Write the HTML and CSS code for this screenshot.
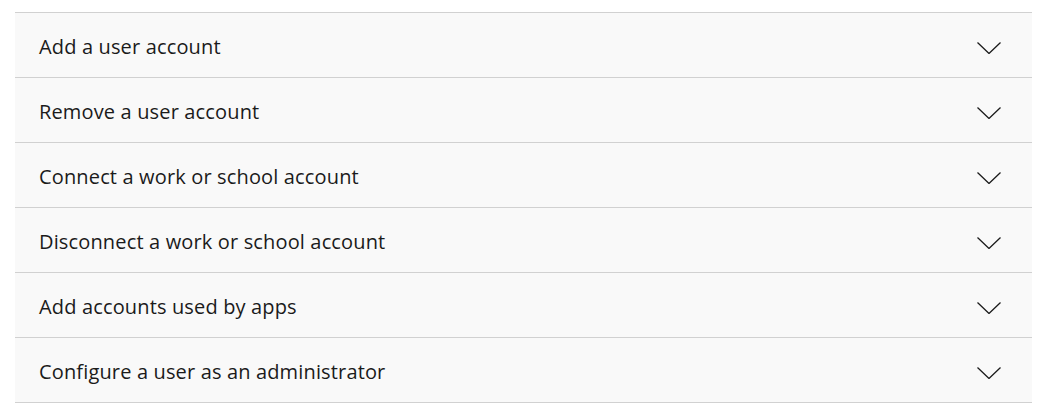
FILE: index.html
```html
<!DOCTYPE html>
<html lang="en">
<head>
<meta charset="utf-8">
<title>Accounts</title>
<link rel="stylesheet" href="styles.css">
</head>
<body>
<ul class="list">
  <li class="item"><span class="label">Add a user account</span><svg class="chev" viewBox="0 0 24 12" width="24" height="12"><path d="M0.5 0.5 L12 11.5 L23.5 0.5" /></svg></li>
  <li class="item"><span class="label">Remove a user account</span><svg class="chev" viewBox="0 0 24 12" width="24" height="12"><path d="M0.5 0.5 L12 11.5 L23.5 0.5" /></svg></li>
  <li class="item"><span class="label">Connect a work or school account</span><svg class="chev" viewBox="0 0 24 12" width="24" height="12"><path d="M0.5 0.5 L12 11.5 L23.5 0.5" /></svg></li>
  <li class="item"><span class="label">Disconnect a work or school account</span><svg class="chev" viewBox="0 0 24 12" width="24" height="12"><path d="M0.5 0.5 L12 11.5 L23.5 0.5" /></svg></li>
  <li class="item"><span class="label">Add accounts used by apps</span><svg class="chev" viewBox="0 0 24 12" width="24" height="12"><path d="M0.5 0.5 L12 11.5 L23.5 0.5" /></svg></li>
  <li class="item"><span class="label">Configure a user as an administrator</span><svg class="chev" viewBox="0 0 24 12" width="24" height="12"><path d="M0.5 0.5 L12 11.5 L23.5 0.5" /></svg></li>
</ul>
</body>
</html>
```
FILE: styles.css
```css
html, body {
  margin: 0;
  padding: 0;
  background: #ffffff;
}
body {
  padding: 12px 11px 0 15px;
  font-family: "Open Sans", "Noto Sans", sans-serif;
}
.list {
  list-style: none;
  margin: 0;
  padding: 0;
  border-bottom: 1px solid #d1d1d1;
}
.item {
  display: flex;
  align-items: center;
  justify-content: space-between;
  height: 64px;
  border-top: 1px solid #d1d1d1;
  background: #f9f9f9;
  padding: 0 31px 0 24px;
}
.label {
  margin-top: 2px;
  font-size: 20px;
  color: #1b1b1b;
  letter-spacing: 0.15px;
}
.chev {
  margin-top: 5px;
  fill: none;
  stroke: #1b1b1b;
  stroke-width: 1.3;
}
```
